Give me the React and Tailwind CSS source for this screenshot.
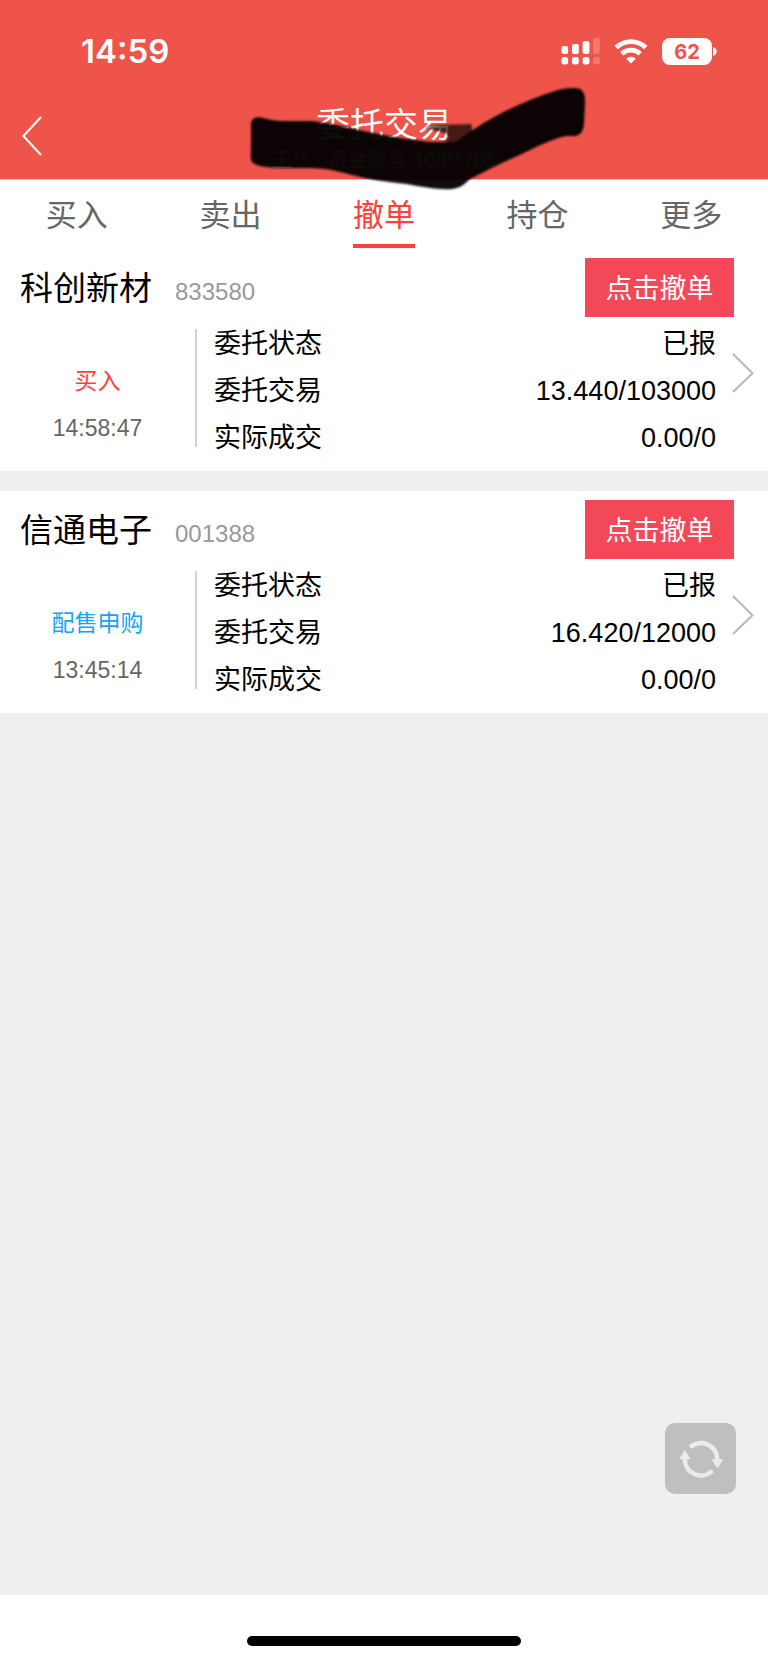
import React, { useState } from 'react'
import clsx from 'clsx'

const TABS = ['买入', '卖出', '撤单', '持仓', '更多']

const ORDERS = [
  {
    name: '科创新材',
    code: '833580',
    type: '买入',
    typeColor: 'text-[#ff403c]',
    time: '14:58:47',
    status: '已报',
    order: '13.440/103000',
    deal: '0.00/0'
  },
  {
    name: '信通电子',
    code: '001388',
    type: '配售申购',
    typeColor: 'text-[#10a5fb]',
    time: '13:45:14',
    status: '已报',
    order: '16.420/12000',
    deal: '0.00/0'
  }
]

const SignalIcon = () => (
  <svg width="39" height="27" viewBox="0 0 39 27" fill="#fff" aria-hidden="true">
    <rect x="0.5" y="8" width="6.6" height="8" rx="2" />
    <rect x="11" y="6" width="6.8" height="10" rx="2" />
    <rect x="21.6" y="3" width="6.8" height="13" rx="2" />
    <rect x="32.2" y="0" width="6.6" height="16" rx="2" opacity="0.22" />
    <rect x="0.5" y="19" width="6.6" height="7.6" rx="2.4" />
    <rect x="11" y="19" width="6.8" height="7.6" rx="2.4" />
    <rect x="21.6" y="19" width="6.8" height="7.6" rx="2.4" />
    <rect x="32.2" y="19" width="6.6" height="7.6" rx="2.4" opacity="0.22" />
  </svg>
)

const WifiIcon = () => (
  <svg width="34" height="25" viewBox="0 0 34 25" fill="none" stroke="#fff" strokeWidth="4.8" aria-hidden="true">
    <path d="M2.2 8.6a21.4 21.4 0 0 1 29.6 0" />
    <path d="M7.8 14.8a13.2 13.2 0 0 1 18.4 0" />
    <path d="M17 24.6l-4.9-4.8a7 7 0 0 1 9.8 0z" fill="#fff" stroke="none" />
  </svg>
)

const Battery = ({ level }) => (
  <div className="flex items-center gap-px">
    <div className="w-[50px] h-[27px] rounded-lg bg-white flex items-center justify-center font-[Inter,sans-serif] font-bold text-[20px] leading-none text-[#ee544a]">
      {level}
    </div>
    <svg width="4" height="9" viewBox="0 0 4 9" fill="#fff" aria-hidden="true">
      <path d="M0 0c2.4.8 3.6 2.3 3.6 4.5S2.4 8.2 0 9z" />
    </svg>
  </div>
)

// Marker stroke drawn over the account line
const Marker = () => (
  <svg
    className="absolute z-10 left-1/2 -translate-x-1/2 top-[80px] pointer-events-none"
    width="408"
    height="115"
    viewBox="180 80 408 115"
    aria-hidden="true"
  >
    <defs>
      <filter id="soft" x="-5%" y="-10%" width="110%" height="120%">
        <feGaussianBlur stdDeviation="1.3" />
      </filter>
    </defs>
    <g filter="url(#soft)">
      <path
        d="M424 127C440 124 455 125 471 124C473 127 472 131 469 134L456 143L444 141C452 137 448 132 436 131z"
        opacity="0.7"
      />
      <path
        d="M251 123C252 118 257 116 263 118C270 120 276 121 284 121L312 121C332 123 352 129 374 133C392 137 410 140 432 142L456 142C462 138 468 132 476 128C500 112 530 99 558 90C566 88 574 87 580 89C585 92 585 97 585 104L584 122C584 130 581 135 575 136L566 136C552 139 538 146 522 154C504 162 486 171 470 179C464 185 460 188 452 189C438 190 424 187 406 184C386 182 368 179 348 174C334 170 322 168 306 168L276 168C264 167 256 166 252 162C250 158 251 152 251 146z"
        opacity="0.95"
      />
    </g>
  </svg>
)

const OrderCard = ({ order }) => (
  <article className="bg-white pt-[9px] pb-[9px]">
    <div className="flex items-center justify-between pl-5 pr-[34px]">
      <h2 className="flex items-baseline gap-[23px] pt-[6px] text-[33px] leading-[40px] text-black">
        {order.name}
        <span className="text-[24px] text-[#999]">{order.code}</span>
      </h2>
      <button type="button" className="w-[149px] h-[59px] pt-1 bg-[#f34858] text-white text-[27px] leading-none">
        点击撤单
      </button>
    </div>

    <div className="flex items-center pt-1">
      <div className="w-[195px] pt-[27px] text-center text-[23px] leading-[47px]">
        <p className={order.typeColor}>{order.type}</p>
        <p className="text-[#666]">{order.time}</p>
      </div>
      <dl className="flex-1 relative pl-[19px] text-[27px] leading-[47px] text-black">
        <div className="absolute left-0 top-2 h-[118px] w-[2px] bg-[#d2d2d2]" />
        <div className="flex justify-between">
          <dt>委托状态</dt>
          <dd>{order.status}</dd>
        </div>
        <div className="flex justify-between">
          <dt>委托交易</dt>
          <dd>{order.order}</dd>
        </div>
        <div className="flex justify-between">
          <dt>实际成交</dt>
          <dd>{order.deal}</dd>
        </div>
      </dl>
      <div className="w-[52px] pl-4 pb-[38px]">
        <svg width="22" height="40" viewBox="0 0 22 40" fill="none" stroke="#b8b8b8" strokeWidth="2" aria-hidden="true">
          <path d="M1 1l19.5 19.2L1 39" />
        </svg>
      </div>
    </div>
  </article>
)

const App = () => {
  const [activeTab, setActiveTab] = useState('撤单')

  return (
    <div className="min-h-screen flex flex-col bg-[#efefef] font-['Liberation_Sans','Noto_Sans_CJK_SC',sans-serif]">
      <header className="relative bg-[#ee544a] text-white border-b border-[#d0c8c8]">
        {/* Status bar */}
        <div className="h-[103px] flex items-center justify-between pl-[81px] pr-[51px]">
          <span className="font-[Inter,sans-serif] font-semibold text-[33px] leading-none">14:59</span>
          <div className="flex items-center gap-[14px]">
            <SignalIcon />
            <WifiIcon />
            <Battery level={62} />
          </div>
        </div>

        {/* Title bar */}
        <div className="flex items-start pt-[3px] pb-[3px]">
          <button type="button" aria-label="返回" className="w-[80px] h-[60px] flex items-center pl-[22px]">
            <svg width="20" height="40" viewBox="0 0 20 40" fill="none" stroke="#fff" strokeWidth="2" aria-hidden="true">
              <path d="M19 1L1.4 20L19 39" />
            </svg>
          </button>
          <div className="flex-1 text-center">
            <h1 className="text-[34px] leading-[38px]">委托交易</h1>
            <p className="flex justify-center gap-5 text-[20px] leading-[32px]">
              <span>王**</span>
              <span>资金账号:108**705</span>
            </p>
          </div>
          <div className="w-[80px]" />
        </div>
        <Marker />
      </header>

      <nav className="h-[69px] flex bg-white text-[31px]">
        {TABS.map((tab) => (
          <button
            key={tab}
            type="button"
            onClick={() => setActiveTab(tab)}
            className="flex-1 flex justify-center"
          >
            <span
              className={clsx(
                'h-[68px] leading-[72px] border-b-4',
                tab === activeTab ? 'text-[#ff403c] border-[#ff403c]' : 'text-[#666] border-transparent'
              )}
            >
              {tab}
            </span>
          </button>
        ))}
      </nav>

      {/* Orders */}
      <main className="flex-1 flex flex-col gap-5">
        {ORDERS.map((order) => (
          <OrderCard key={order.code} order={order} />
        ))}
      </main>

      <button
        type="button"
        aria-label="刷新"
        className="fixed right-8 bottom-[169px] w-[71px] h-[71px] rounded-[10px] bg-[#bfbfbf] flex items-center justify-center"
      >
        <svg width="44" height="40" viewBox="0 0 44 40" fill="none" stroke="#ebebeb" strokeWidth="4.6" strokeLinecap="round" aria-hidden="true">
          <path d="M12.7 7A16.2 16.2 0 0 1 38.2 20" />
          <path d="M32 33A16.2 16.2 0 0 1 5.8 20" />
          <path d="M32.4 20.2h11.8L38.5 29.4z" fill="#ebebeb" stroke="none" />
          <path d="M0 20.2h11.8L5.8 11z" fill="#ebebeb" stroke="none" />
        </svg>
      </button>

      <footer className="h-[68px] bg-white flex justify-center items-end pb-[17px]">
        <div className="w-[274px] h-[10px] rounded-full bg-black" />
      </footer>
    </div>
  )
}

export default App
